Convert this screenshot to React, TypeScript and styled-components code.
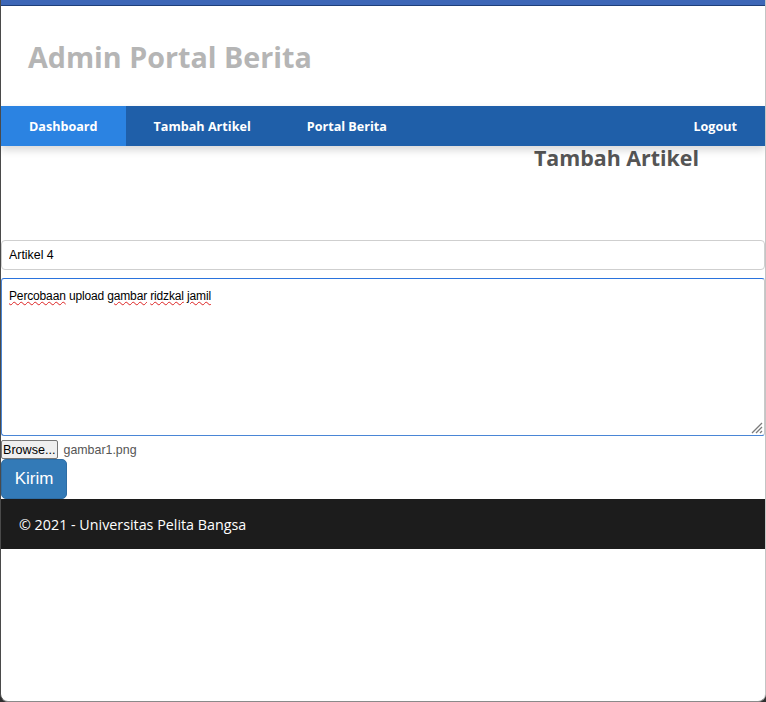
import React from "react";
import styled, { createGlobalStyle } from "styled-components";

const GlobalStyle = createGlobalStyle`
  html, body {
    margin: 0;
    padding: 0;
    background: #2f2f2f;
  }
  * {
    box-sizing: border-box;
  }
`;

const Frame = styled.div`
  width: 766px;
  height: 702px;
  background: #fff;
  border-left: 1px solid #4a4a4a;
  border-right: 1px solid #c4c4c4;
  border-bottom: 1px solid #8a8a8a;
  border-radius: 0 0 8px 8px;
  overflow: hidden;
  display: flex;
  flex-direction: column;
`;

const TopStrip = styled.div`
  height: 6px;
  background: #3d67b7;
  border-bottom: 1px solid #1e3f7a;
  flex-shrink: 0;
`;

const Header = styled.header`
  height: 100px;
  display: flex;
  align-items: center;
  padding-left: 27px;
  padding-top: 1px;
`;

const SiteTitle = styled.h1`
  margin: 0;
  font-family: "Open Sans", sans-serif;
  font-weight: 700;
  font-size: 28.7px;
  color: #b5b5b5;
`;

const Nav = styled.nav`
  height: 40px;
  display: flex;
  background: #1f5fa9;
  box-shadow: 0 4px 8px rgba(0, 0, 0, 0.16);
  position: relative;
  z-index: 1;
`;

const NavLink = styled.a<{ $active?: boolean; $right?: boolean }>`
  display: flex;
  align-items: center;
  padding: 0 28px;
  height: 100%;
  font-family: "Open Sans", sans-serif;
  font-weight: 700;
  font-size: 12.6px;
  color: #fff;
  text-decoration: none;
  background: ${(p) => (p.$active ? "#2b83e2" : "transparent")};
  margin-left: ${(p) => (p.$right ? "auto" : "0")};
`;

const Main = styled.main`
  display: flex;
  flex-direction: column;
`;

const HeadingRow = styled.div`
  display: flex;
  justify-content: flex-end;
  padding-right: 66px;
  height: 94px;
`;

const PageHeading = styled.h2`
  margin: 0;
  font-family: "Open Sans", sans-serif;
  font-weight: 700;
  font-size: 21.4px;
  line-height: 24px;
  color: #555;
`;

const TextInput = styled.input`
  width: 100%;
  height: 30px;
  border: 1px solid #cfcfcf;
  border-radius: 4px;
  padding: 0 7px;
  font-family: "Liberation Sans", Arial, sans-serif;
  font-size: 12.4px;
  color: #000;
  outline: none;
`;

const TextBox = styled.div`
  position: relative;
  margin-top: 8px;
  height: 158px;
  border: 1px solid #4a86d6;
  border-top-color: #2a73dd;
  border-right-color: #c9c9c9;
  border-radius: 3px;
  padding: 10px 7px;
  font-family: "Liberation Sans", Arial, sans-serif;
  font-size: 12px;
  letter-spacing: -0.15px;
  color: #000;
`;

const Misspelled = styled.span`
  text-decoration: underline wavy #d22;
  text-decoration-thickness: 1px;
  text-underline-offset: 1px;
`;

const Grip = styled.svg`
  position: absolute;
  right: 1px;
  bottom: 1px;
`;

const FileRow = styled.div`
  display: flex;
  align-items: center;
  gap: 6px;
  margin-top: 4px;
  height: 19px;
`;

const BrowseButton = styled.button`
  height: 19px;
  padding: 0 1px;
  font-family: "Liberation Sans", Arial, sans-serif;
  font-size: 12.6px;
  color: #000;
  background: #efefef;
  border: 1px solid #767676;
  border-radius: 2px;
`;

const FileName = styled.span`
  font-family: "Liberation Sans", Arial, sans-serif;
  font-size: 12.4px;
  color: #555;
`;

const SubmitButton = styled.button`
  align-self: flex-start;
  height: 40px;
  width: 66px;
  background: #337ab7;
  border: 1px solid #2e6da4;
  border-radius: 5px;
  color: #fff;
  font-family: "Liberation Sans", Arial, sans-serif;
  font-size: 17px;
`;

const Footer = styled.footer`
  height: 50px;
  background: #1c1c1c;
  display: flex;
  align-items: center;
  padding-left: 18px;
  font-family: "Open Sans", sans-serif;
  font-size: 14.3px;
  color: #fff;
`;

export default function App() {
  return (
    <>
      <GlobalStyle />
      <Frame>
        <TopStrip />
        <Header>
          <SiteTitle>Admin Portal Berita</SiteTitle>
        </Header>
        <Nav>
          <NavLink $active href="#">Dashboard</NavLink>
          <NavLink href="#">Tambah Artikel</NavLink>
          <NavLink href="#">Portal Berita</NavLink>
          <NavLink $right href="#">Logout</NavLink>
        </Nav>
        <Main>
          <HeadingRow>
            <PageHeading>Tambah Artikel</PageHeading>
          </HeadingRow>
          <TextInput defaultValue="Artikel 4" />
          <TextBox>
            <Misspelled>Percobaan</Misspelled> upload{" "}
            <Misspelled>gambar</Misspelled> <Misspelled>ridzkal</Misspelled>{" "}
            <Misspelled>jamil</Misspelled>
            <Grip width="14" height="14" viewBox="0 0 14 14">
              <path d="M13 3 L3 13 M13 7 L7 13 M13 11 L11 13" stroke="#7a7a7a" strokeWidth="1.3" />
            </Grip>
          </TextBox>
          <FileRow>
            <BrowseButton>Browse...</BrowseButton>
            <FileName>gambar1.png</FileName>
          </FileRow>
          <SubmitButton>Kirim</SubmitButton>
        </Main>
        <Footer>© 2021 - Universitas Pelita Bangsa</Footer>
      </Frame>
    </>
  );
}
